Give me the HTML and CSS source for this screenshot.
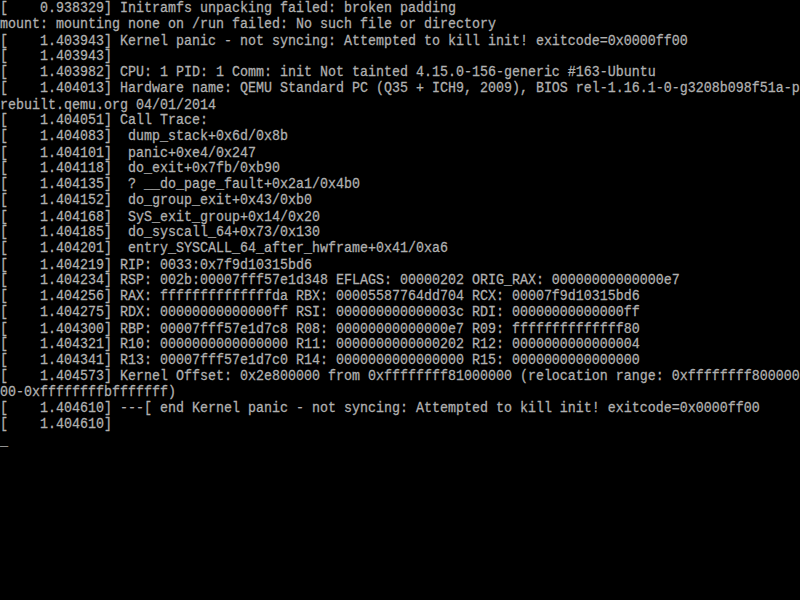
FILE: index.html
```html
<!DOCTYPE html>
<html>
<head>
<meta charset="utf-8">
<link rel="stylesheet" href="styles.css">
</head>
<body>
<pre class="console">[    0.938329] Initramfs unpacking failed: broken padding
mount: mounting none on /run failed: No such file or directory
[    1.403943] Kernel panic - not syncing: Attempted to kill init! exitcode=0x0000ff00
[    1.403943]
[    1.403982] CPU: 1 PID: 1 Comm: init Not tainted 4.15.0-156-generic #163-Ubuntu
[    1.404013] Hardware name: QEMU Standard PC (Q35 + ICH9, 2009), BIOS rel-1.16.1-0-g3208b098f51a-p
rebuilt.qemu.org 04/01/2014
[    1.404051] Call Trace:
[    1.404083]  dump_stack+0x6d/0x8b
[    1.404101]  panic+0xe4/0x247
[    1.404118]  do_exit+0x7fb/0xb90
[    1.404135]  ? __do_page_fault+0x2a1/0x4b0
[    1.404152]  do_group_exit+0x43/0xb0
[    1.404168]  SyS_exit_group+0x14/0x20
[    1.404185]  do_syscall_64+0x73/0x130
[    1.404201]  entry_SYSCALL_64_after_hwframe+0x41/0xa6
[    1.404219] RIP: 0033:0x7f9d10315bd6
[    1.404234] RSP: 002b:00007fff57e1d348 EFLAGS: 00000202 ORIG_RAX: 00000000000000e7
[    1.404256] RAX: ffffffffffffffda RBX: 00005587764dd704 RCX: 00007f9d10315bd6
[    1.404275] RDX: 00000000000000ff RSI: 000000000000003c RDI: 00000000000000ff
[    1.404300] RBP: 00007fff57e1d7c8 R08: 00000000000000e7 R09: ffffffffffffff80
[    1.404321] R10: 0000000000000000 R11: 0000000000000202 R12: 0000000000000004
[    1.404341] R13: 00007fff57e1d7c0 R14: 0000000000000000 R15: 0000000000000000
[    1.404573] Kernel Offset: 0x2e800000 from 0xffffffff81000000 (relocation range: 0xffffffff800000
00-0xffffffffbfffffff)
[    1.404610] ---[ end Kernel panic - not syncing: Attempted to kill init! exitcode=0x0000ff00
[    1.404610]
<span class="cursor">_</span></pre>
</body>
</html>
```
FILE: styles.css
```css
html, body {
  margin: 0;
  padding: 0;
  background: #000;
  width: 800px;
  height: 600px;
  overflow: hidden;
}
.console {
  margin: 0;
  padding: 1px 0 0 0;
  color: #b0b0b0;
  font-family: "Liberation Mono", "DejaVu Sans Mono", monospace;
  font-size: 13.333px;
  line-height: 14.2857px;
  white-space: pre;
  transform: scaleY(1.12);
  transform-origin: 0 0;
  -webkit-text-stroke: 0.25px #b0b0b0;
}
.cursor {
  color: #b0b0b0;
}
```
